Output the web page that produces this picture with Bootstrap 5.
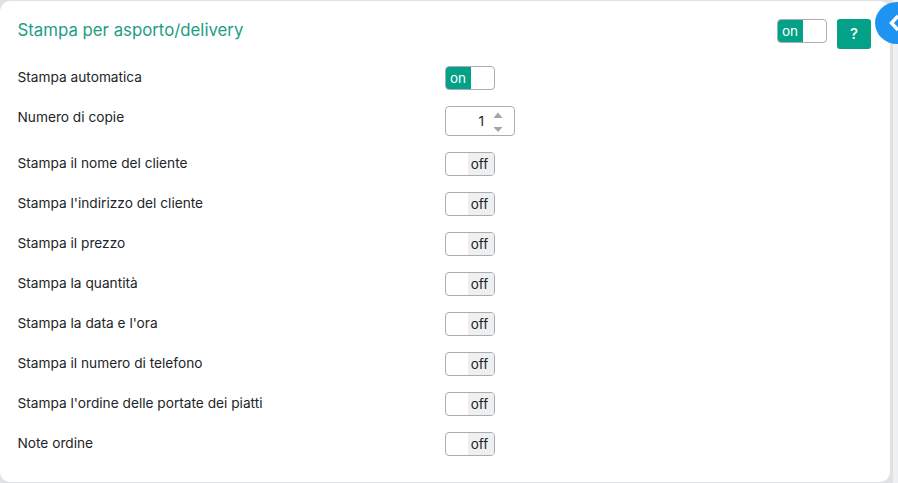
<!DOCTYPE html>
<html lang="en">
<head>
  <meta charset="UTF-8">
  <title>Stampa per asporto/delivery</title>
  <meta name="viewport" content="width=device-width, initial-scale=1">
  <link href="https://cdn.jsdelivr.net/npm/bootstrap@5.3.0/dist/css/bootstrap.min.css" rel="stylesheet">
  <style>
    html, body { height: 483px; overflow: hidden; }
    body { background: linear-gradient(to right, #dfe1e4 893px, #eff0f2 893px); font-family: Inter, "Noto Sans", sans-serif; font-size: 13.7px; color: #212529; padding-top: 1px; }
    .sheet { width: 890px; height: 481px; background: #fff; border-radius: 10px; padding: 18px 19px 0 17.5px; }
    .sheet-title { font-size: 16.8px; font-weight: 400; color: #1d9d85; margin: 0; line-height: 22px; }
    .head-row { height: 47px; }
    .opt-row { height: 40px; }
    .opt-row.count { height: 46px; }
    .opt-label { width: 427.5px; flex: none; line-height: 20px; padding-top: 1px; }
    .flip { display: flex; width: 50px; height: 24px; border: 1px solid #a9adb2; border-radius: 4px; overflow: hidden; font-size: 13.5px; line-height: 22px; background: #fff; }
    .flip-on { width: 26px; background: #03a187; color: #fff; text-align: center; margin: -1px 0 -1px -1px; padding-top: 1px; height: 24px; border-radius: 4px 0 0 4px; }
    .flip-off { width: 26px; margin-left: auto; background: #eeeff0; text-align: center; color: #212529; padding-right: 3px; }
    .help-btn { width: 34px; height: 30px; padding: 0; background: #03a187; border: 0; border-radius: 3px; color: #fff; font-size: 15px; font-weight: 500; }
    .count-box { width: 70px; height: 30px; border: 1px solid #a9adb2; border-radius: 4px; padding-right: 30px; line-height: 29px; text-align: right; }
    .count-arrows { position: absolute; right: 11px; top: 5px; }
    .side-tab { position: absolute; left: 875px; top: 2px; width: 44px; height: 42px; background: #1f93f1; border-radius: 50%; }
  </style>
</head>
<body>
  <div class="sheet">
    <div class="d-flex justify-content-between align-items-start head-row">
      <h5 class="sheet-title">Stampa per asporto/delivery</h5>
      <div class="d-flex gap-2">
        <div class="flip" style="margin-right:2px">
          <div class="flip-on">on</div>
        </div>
        <button type="button" class="btn help-btn">?</button>
      </div>
    </div>

    <div class="d-flex align-items-start opt-row">
      <div class="opt-label">Stampa automatica</div>
      <div class="flip"><div class="flip-on">on</div></div>
    </div>
    <div class="d-flex align-items-start opt-row count">
      <div class="opt-label">Numero di copie</div>
      <div class="count-box position-relative">1
        <svg class="count-arrows" width="10" height="20" viewBox="0 0 10 20">
          <path d="M0.5 6 L5 0.5 L9.5 6 Z" fill="#a3a6a9"/>
          <path d="M0.5 15 L9.5 15 L5 20 Z" fill="#a3a6a9"/>
        </svg>
      </div>
    </div>
    <div class="d-flex align-items-start opt-row">
      <div class="opt-label">Stampa il nome del cliente</div>
      <div class="flip"><div class="flip-off">off</div></div>
    </div>
    <div class="d-flex align-items-start opt-row">
      <div class="opt-label">Stampa l'indirizzo del cliente</div>
      <div class="flip"><div class="flip-off">off</div></div>
    </div>
    <div class="d-flex align-items-start opt-row">
      <div class="opt-label">Stampa il prezzo</div>
      <div class="flip"><div class="flip-off">off</div></div>
    </div>
    <div class="d-flex align-items-start opt-row">
      <div class="opt-label">Stampa la quantità</div>
      <div class="flip"><div class="flip-off">off</div></div>
    </div>
    <div class="d-flex align-items-start opt-row">
      <div class="opt-label">Stampa la data e l'ora</div>
      <div class="flip"><div class="flip-off">off</div></div>
    </div>
    <div class="d-flex align-items-start opt-row">
      <div class="opt-label">Stampa il numero di telefono</div>
      <div class="flip"><div class="flip-off">off</div></div>
    </div>
    <div class="d-flex align-items-start opt-row">
      <div class="opt-label">Stampa l'ordine delle portate dei piatti</div>
      <div class="flip"><div class="flip-off">off</div></div>
    </div>
    <div class="d-flex align-items-start opt-row">
      <div class="opt-label">Note ordine</div>
      <div class="flip"><div class="flip-off">off</div></div>
    </div>
  </div>

  <div class="side-tab">
    <svg width="16" height="20" viewBox="0 0 16 20" class="d-block" style="margin:11px 0 0 12px">
      <path d="M11 3 L4.5 10 L11 17" fill="none" stroke="#fff" stroke-width="3.4"/>
    </svg>
  </div>
</body>
</html>
